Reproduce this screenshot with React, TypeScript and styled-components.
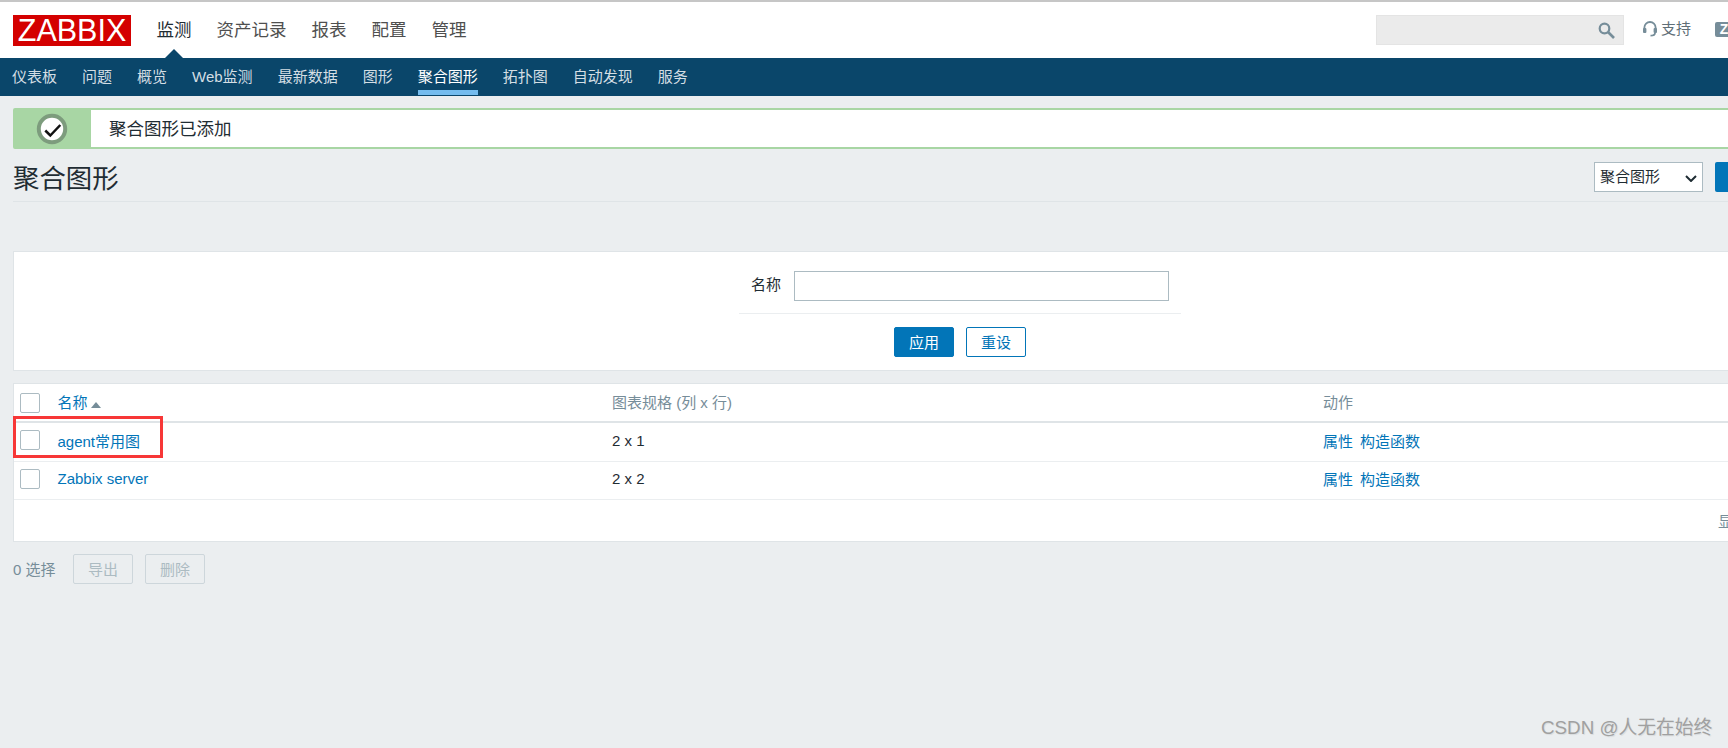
import React from 'react';
import styled, { createGlobalStyle } from 'styled-components';

const FONT = `"Liberation Sans", Arial, "Noto Sans CJK SC", sans-serif`;

const GlobalStyle = createGlobalStyle`
  html, body {
    margin: 0;
    padding: 0;
    height: 100%;
    overflow: hidden;
    background: #ebeef0;
  }
  body {
    font-family: ${FONT};
    font-size: 15px;
    color: #1f2c33;
  }
`;

const Page = styled.div`
  width: 1920px;
  height: 748px;
  position: relative;
  border-top: 2px solid #c6c6c6;
  box-sizing: border-box;
`;

const Header = styled.header`
  height: 56px;
  background: #fff;
  display: flex;
  align-items: flex-start;
  padding: 13px 13px 0;
  box-sizing: border-box;
`;

const Logo = styled.div`
  width: 118px;
  height: 31px;
  background: #d40000;
  color: #fff;
  font-size: 30.5px;
  line-height: 31px;
  text-align: center;
  margin-right: 13px;
`;

const TopNav = styled.nav`
  display: flex;
  height: 43px;
`;

const TopItem = styled.a<{ $active?: boolean }>`
  position: relative;
  padding: 0 12.5px;
  font-size: 17.5px;
  line-height: 31px;
  color: ${p => (p.$active ? '#1f2c33' : '#4f4f4f')};

  ${p =>
    p.$active &&
    `
    &::after {
      content: '';
      position: absolute;
      left: 50%;
      bottom: 0;
      margin-left: -9px;
      border-left: 9px solid transparent;
      border-right: 9px solid transparent;
      border-bottom: 9px solid #0a466a;
    }
  `}
`;

const HeaderRight = styled.div`
  margin-left: auto;
  display: flex;
  align-items: center;
  height: 30px;
  padding-right: 174px;
`;

const SearchBox = styled.div`
  width: 248px;
  height: 30px;
  box-sizing: border-box;
  background: #ebebeb;
  border: 1px solid #e4e4e4;
  display: flex;
  align-items: center;
  justify-content: flex-end;
  padding-right: 8px;
  margin-right: 19px;
`;

const SupportLink = styled.a`
  display: flex;
  align-items: center;
  gap: 4px;
  color: #5f6f78;
  font-size: 15px;
  line-height: 15px;
  margin: 0 24px 3px 0;
`;

const ShareBadge = styled.span`
  width: 18px;
  height: 15px;
  margin-bottom: 1px;
  border-radius: 2px;
  background: #768d99;
  color: #fff;
  font-size: 14px;
  font-weight: 700;
  line-height: 15px;
  text-align: center;
`;

const SubNav = styled.nav`
  height: 38px;
  background: #0a466a;
  display: flex;
  padding-left: 12px;
  gap: 25px;
`;

const SubItem = styled.a<{ $active?: boolean }>`
  height: 38px;
  font-size: 15px;
  line-height: 38px;
  color: ${p => (p.$active ? '#ffffff' : '#d4dee4')};
  ${p => p.$active && `
    &::after {
      content: '';
      display: block;
      height: 5px;
      background: #74bcee;
      margin-top: -6px;
    }
  `}
`;

const Content = styled.main`
  padding: 12px 13px 0;
`;

const Message = styled.div`
  height: 41px;
  box-sizing: border-box;
  border: 2px solid #a8d6a4;
  border-radius: 2px;
  background: #fff;
  display: flex;
  align-items: center;
`;

const MessageIcon = styled.div`
  width: 78px;
  height: 37px;
  background: #a8d6a4;
  display: flex;
  align-items: center;
  justify-content: center;
  margin-left: -2px;
`;

const MessageText = styled.span`
  font-size: 17.5px;
  margin: 0 0 2px 18px;
  color: #1f2c33;
`;

const TitleRow = styled.div`
  height: 53px;
  box-sizing: border-box;
  border-bottom: 1px solid #dfe4e7;
  display: flex;
  align-items: flex-start;
  justify-content: space-between;
  margin-bottom: 49px;
  padding-top: 13px;
`;

const Title = styled.h1`
  margin: 0;
  font-size: 26.4px;
  font-weight: 400;
  line-height: 34px;
  color: #1f2c33;
`;

const TitleControls = styled.div`
  display: flex;
  gap: 12px;
`;

const ViewSelect = styled.select`
  width: 109px;
  height: 30px;
  box-sizing: border-box;
  appearance: none;
  border: 1px solid #acbbc2;
  border-radius: 0;
  background: #fff url("data:image/svg+xml,%3Csvg xmlns='http://www.w3.org/2000/svg' width='12' height='7'%3E%3Cpath d='M1 1l5 5 5-5' fill='none' stroke='%231f2c33' stroke-width='2'/%3E%3C/svg%3E") no-repeat 90px 12px;
  font-family: ${FONT};
  font-size: 15px;
  color: #1f2c33;
  padding: 0 0 2px 5px;
`;

const CreateButton = styled.button`
  width: 192px;
  height: 30px;
  border: 0;
  border-radius: 2px;
  background: #0275b8;
  color: #fff;
  font-family: ${FONT};
  font-size: 15px;
`;

const FilterPanel = styled.section`
  height: 120px;
  box-sizing: border-box;
  background: #fff;
  border: 1px solid #dfe4e7;
  display: flex;
  flex-direction: column;
  align-items: center;
  margin-bottom: 12px;
`;

const FilterRow = styled.div`
  width: 442px;
  height: 62px;
  box-sizing: border-box;
  border-bottom: 1px solid #ebeef0;
  display: flex;
  align-items: flex-start;
  padding: 19px 0 0 12px;
  gap: 13px;
`;

const FilterLabel = styled.label`
  line-height: 28px;
  color: #1f2c33;
`;

const FilterInput = styled.input`
  width: 375px;
  height: 30px;
  box-sizing: border-box;
  border: 1px solid #acbbc2;
  background: #fff;
  outline: none;
`;

const FilterActions = styled.div`
  display: flex;
  gap: 12px;
  padding-top: 13px;
`;

const Button = styled.button<{ $outline?: boolean }>`
  width: 60px;
  height: 30px;
  box-sizing: border-box;
  border-radius: 2px;
  border: 1px solid #0275b8;
  background: ${p => (p.$outline ? '#fff' : '#0275b8')};
  color: ${p => (p.$outline ? '#0275b8' : '#fff')};
  font-family: ${FONT};
  font-size: 15px;
  padding: 0 0 2px;
`;

const TablePanel = styled.section`
  background: #fff;
  border: 1px solid #dfe4e7;
`;

const GridRow = styled.div<{ $head?: boolean }>`
  display: grid;
  grid-template-columns: 37.5px 554.5px 711px 1fr;
  align-items: center;
  box-sizing: border-box;
  height: ${p => (p.$head ? 39 : 38.5)}px;
  border-bottom: ${p => (p.$head ? '2px solid #dfe4e7' : '1px solid #ebeef0')};
  padding: 0 0 ${p => (p.$head ? 0 : 3)}px 6px;
`;

const Check = styled.span`
  display: block;
  width: 20px;
  height: 20px;
  box-sizing: border-box;
  border: 1px solid #acbbc2;
  border-radius: 2px;
  background: #fff;
`;

const TableLink = styled.a`
  color: #0275b8;
`;

const HeadCell = styled.span`
  padding-bottom: 2px;
  color: #768d99;
`;

const SortArrow = styled.span`
  display: inline-block;
  margin-left: 3px;
  border-left: 5px solid transparent;
  border-right: 5px solid transparent;
  border-bottom: 6px solid #768d99;
`;

const ActionLinks = styled.div`
  display: flex;
  gap: 7px;
`;

const Pager = styled.div`
  height: 41px;
  display: flex;
  align-items: center;
  justify-content: flex-end;
  padding-right: 73px;
  color: #768d99;
`;

const SelectionBar = styled.div`
  display: flex;
  align-items: center;
  gap: 12px;
  margin-top: 12px;
  color: #768d99;
`;

const SelectedCount = styled.span`
  width: 48px;
  padding-bottom: 2px;
`;

const DisabledButton = styled.button`
  width: 60px;
  height: 30px;
  box-sizing: border-box;
  border: 1px solid #cdd6db;
  border-radius: 2px;
  background: #ebeef0;
  color: #acbbc2;
  font-family: ${FONT};
  font-size: 15px;
  padding: 0 0 2px;
`;

const RedMark = styled.div`
  position: absolute;
  left: 13px;
  top: 414px;
  width: 150px;
  height: 42px;
  box-sizing: border-box;
  border: 3px solid #f73737;
`;

const Watermark = styled.div`
  position: absolute;
  left: 1541px;
  top: 713px;
  font-size: 18.8px;
  line-height: 26px;
  color: #a0a0a0;
  text-shadow: 1px 1px 1px rgba(0, 0, 0, 0.08);
`;

const SearchIcon = () => (
  <svg width="17" height="17" viewBox="0 0 17 17" fill="none" stroke="#768d99" strokeWidth="2.2">
    <circle cx="6.5" cy="6.5" r="4.8" />
    <path d="M10 10l6 6" strokeWidth="2.6" />
  </svg>
);

const HeadsetIcon = () => (
  <svg width="14" height="16" viewBox="0 0 14 16" fill="none" stroke="#768d99" strokeWidth="1.8">
    <path d="M1.4 9V6.6a5.6 5.6 0 0 1 11.2 0V9" />
    <rect x="0" y="7" width="3.4" height="5" rx="1" fill="#768d99" stroke="none" />
    <rect x="10.6" y="7" width="3.4" height="5" rx="1" fill="#768d99" stroke="none" />
    <path d="M12 12c0 1.6-1.6 2.7-4.5 2.7" />
  </svg>
);

const CheckBadge = () => (
  <svg width="32" height="32" viewBox="0 0 32 32">
    <circle cx="16" cy="16" r="13.2" fill="#fff" stroke="#7d9c7d" strokeWidth="4" />
    <path d="M9.3 17.5l5 5 10-10.5" fill="none" stroke="#111" strokeWidth="2.5" />
  </svg>
);

const topItems = ['监测', '资产记录', '报表', '配置', '管理'];
const subItems = ['仪表板', '问题', '概览', 'Web监测', '最新数据', '图形', '聚合图形', '拓扑图', '自动发现', '服务'];
const rows = [
  { name: 'agent常用图', size: '2 x 1' },
  { name: 'Zabbix server', size: '2 x 2' },
];

export default function App() {
  return (
    <>
      <GlobalStyle />
      <Page>
        <Header>
          <Logo>ZABBIX</Logo>
          <TopNav>
            {topItems.map((t, i) => (
              <TopItem key={t} $active={i === 0}>{t}</TopItem>
            ))}
          </TopNav>
          <HeaderRight>
            <SearchBox>
              <SearchIcon />
            </SearchBox>
            <SupportLink>
              <HeadsetIcon />
              支持
            </SupportLink>
            <ShareBadge>Z</ShareBadge>
          </HeaderRight>
        </Header>
        <SubNav>
          {subItems.map(t => (
            <SubItem key={t} $active={t === '聚合图形'}>{t}</SubItem>
          ))}
        </SubNav>
        <Content>
          <Message>
            <MessageIcon>
              <CheckBadge />
            </MessageIcon>
            <MessageText>聚合图形已添加</MessageText>
          </Message>
          <TitleRow>
            <Title>聚合图形</Title>
            <TitleControls>
              <ViewSelect defaultValue="聚合图形">
                <option>聚合图形</option>
              </ViewSelect>
              <CreateButton>创建聚合图形</CreateButton>
            </TitleControls>
          </TitleRow>
          <FilterPanel>
            <FilterRow>
              <FilterLabel>名称</FilterLabel>
              <FilterInput />
            </FilterRow>
            <FilterActions>
              <Button>应用</Button>
              <Button $outline>重设</Button>
            </FilterActions>
          </FilterPanel>
          <TablePanel>
            <GridRow $head>
              <Check />
              <HeadCell>
                <TableLink>名称</TableLink>
                <SortArrow />
              </HeadCell>
              <HeadCell>图表规格 (列 x 行)</HeadCell>
              <HeadCell>动作</HeadCell>
            </GridRow>
            {rows.map(r => (
              <GridRow key={r.name}>
                <Check />
                <TableLink>{r.name}</TableLink>
                <span>{r.size}</span>
                <ActionLinks>
                  <TableLink>属性</TableLink>
                  <TableLink>构造函数</TableLink>
                </ActionLinks>
              </GridRow>
            ))}
            <Pager>显示 2，共找到 2</Pager>
          </TablePanel>
          <SelectionBar>
            <SelectedCount>0 选择</SelectedCount>
            <DisabledButton>导出</DisabledButton>
            <DisabledButton>删除</DisabledButton>
          </SelectionBar>
        </Content>
        <RedMark />
        <Watermark>CSDN @人无在始终</Watermark>
      </Page>
    </>
  );
}
